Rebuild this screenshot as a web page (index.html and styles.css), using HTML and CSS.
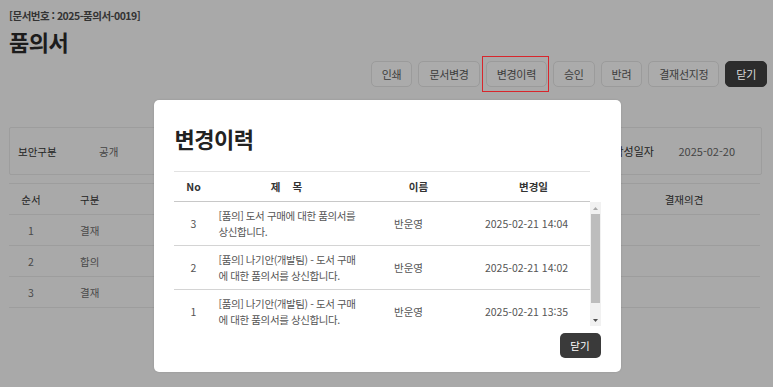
FILE: index.html
```html
<!DOCTYPE html>
<html lang="ko">
<head>
<meta charset="utf-8">
<title>품의서</title>
<link rel="stylesheet" href="styles.css">
</head>
<body>
<div class="page">
  <div class="docno">[문서번호 : 2025-품의서-0019]</div>
  <h1 class="doc-title">품의서</h1>
  <div class="toolbar">
    <button class="btn">인쇄</button>
    <button class="btn">문서변경</button>
    <button class="btn btn-marked">변경이력</button>
    <button class="btn">승인</button>
    <button class="btn">반려</button>
    <button class="btn">결재선지정</button>
    <button class="btn btn-dark">닫기</button>
  </div>
  <div class="info">
    <span class="info-label">보안구분</span>
    <span class="info-value">공개</span>
    <span class="info-spacer"></span>
    <span class="info-label wide">작성일자</span>
    <span class="info-value">2025-02-20</span>
  </div>
  <div class="line-table">
    <div class="lt-row lt-head">
      <span class="c-no">순서</span><span class="c-type">구분</span><span class="c-mid"></span><span class="c-opinion">결재의견</span>
    </div>
    <div class="lt-row">
      <span class="c-no">1</span><span class="c-type">결재</span><span class="c-mid"></span><span class="c-opinion"></span>
    </div>
    <div class="lt-row">
      <span class="c-no">2</span><span class="c-type">합의</span><span class="c-mid"></span><span class="c-opinion"></span>
    </div>
    <div class="lt-row">
      <span class="c-no">3</span><span class="c-type">결재</span><span class="c-mid"></span><span class="c-opinion"></span>
    </div>
  </div>
</div>

<div class="modal-layer">
  <div class="modal">
    <h2 class="modal-title">변경이력</h2>
    <div class="hist">
      <div class="hist-head">
        <span class="h-no">No</span>
        <span class="h-title">제 목</span>
        <span class="h-name">이름</span>
        <span class="h-date">변경일</span>
      </div>
      <div class="hist-body">
        <div class="hist-rows">
          <div class="hist-row">
            <span class="b-no">3</span>
            <span class="b-title">[품의] 도서 구매에 대한 품의서를 상신합니다.</span>
            <span class="b-name">반운영</span>
            <span class="b-date">2025-02-21 14:04</span>
          </div>
          <div class="hist-row">
            <span class="b-no">2</span>
            <span class="b-title">[품의] 나기안(개발팀) - 도서 구매에 대한 품의서를 상신합니다.</span>
            <span class="b-name">반운영</span>
            <span class="b-date">2025-02-21 14:02</span>
          </div>
          <div class="hist-row">
            <span class="b-no">1</span>
            <span class="b-title">[품의] 나기안(개발팀) - 도서 구매에 대한 품의서를 상신합니다.</span>
            <span class="b-name">반운영</span>
            <span class="b-date">2025-02-21 13:35</span>
          </div>
        </div>
        <div class="scrollbar">
          <div class="sb-btn">
            <svg width="5" height="3" viewBox="0 0 5 3"><path d="M0 3 L2.5 0 L5 3 Z" fill="#a8a8a8"/></svg>
          </div>
          <div class="sb-track"><div class="sb-thumb"></div></div>
          <div class="sb-btn">
            <svg width="5" height="3" viewBox="0 0 5 3"><path d="M0 0 L2.5 3 L5 0 Z" fill="#505050"/></svg>
          </div>
        </div>
      </div>
    </div>
    <div class="modal-foot">
      <button class="close-btn">닫기</button>
    </div>
  </div>
</div>
</body>
</html>
```
FILE: styles.css
```css
* { box-sizing: border-box; }

html, body {
  margin: 0;
  padding: 0;
}

body {
  width: 773px;
  height: 387px;
  overflow: hidden;
  background: #a9a9a9;
  font-family: "Noto Sans CJK KR", "Noto Sans", sans-serif;
  color: #2a2a2a;
  position: relative;
}

.page {
  padding: 8px 11px 0 9px;
}

.docno {
  font-size: 10.5px;
  line-height: 16px;
  font-weight: 600;
  color: #333;
  letter-spacing: -0.5px;
}

.doc-title {
  margin: 2px 0 0;
  font-size: 22px;
  line-height: 30px;
  font-weight: 700;
  color: #1c1c1c;
  letter-spacing: -0.5px;
}

.toolbar {
  display: flex;
  justify-content: flex-end;
  gap: 6px;
  margin: 5px -5px 0 0;
}

.btn {
  position: relative;
  height: 26px;
  padding: 0 10px;
  min-width: 40px;
  font-family: inherit;
  font-size: 11px;
  letter-spacing: -0.3px;
  color: #3c3c3c;
  background: #ababab;
  border: 1px solid #9b9b9b;
  border-radius: 5px;
}

.btn-marked::after {
  content: "";
  position: absolute;
  top: -6px;
  bottom: -6px;
  left: -5px;
  right: -3px;
  border: 1.5px solid #d8262c;
}

.btn-dark {
  background: #2c2c2c;
  border-color: #2c2c2c;
  color: #dcdcdc;
}

.info {
  display: flex;
  align-items: center;
  height: 48px;
  margin-top: 40px;
  padding: 0 26px 0 8px;
  border: 1px solid #9d9d9d;
  border-radius: 2px;
  font-size: 10.5px;
}

.info-label {
  width: 81px;
  color: #222;
}

.info-label.wide { width: 65px; font-size: 11px; }

.info-value {
  color: #444;
}

.info-value:last-child { font-size: 11px; }

.info-spacer { flex: 1; }

.line-table {
  margin-top: 8px;
  margin-right: 2px;
  border-top: 1px solid #9d9d9d;
  font-size: 10.5px;
}

.lt-row {
  display: flex;
  align-items: center;
  height: 31px;
  border-bottom: 1px solid #9d9d9d;
  color: #4a4a4a;
}

.lt-head { color: #252525; }

.c-no { width: 44px; text-align: center; }
.c-type { width: 60px; padding-left: 27px; box-sizing: content-box; }
.c-mid { flex: 1; }
.c-opinion { width: 152px; text-align: center; }

/* modal */
.modal-layer {
  position: absolute;
  inset: 0;
  display: flex;
  justify-content: center;
  align-items: flex-start;
  padding: 100px 0 0 1px;
}

.modal {
  width: 467px;
  height: 272px;
  background: #fff;
  border-radius: 5px;
  padding: 24px 20px 14px 20px;
  box-shadow: 0 0 2px rgba(0,0,0,0.15);
}

.modal-title {
  margin: 0 0 0 1px;
  font-size: 22px;
  line-height: 28px;
  font-weight: 700;
  color: #222;
  letter-spacing: -0.5px;
}

.hist {
  margin-top: 19px;
  font-size: 10.5px;
}

.hist-head {
  display: grid;
  grid-template-columns: 40px 146px 118px 112px;
  align-items: center;
  width: 416px;
  height: 31px;
  border-top: 1px solid #e2e2e2;
  border-bottom: 1px solid #c8c8c8;
  color: #333;
  font-weight: 700;
  text-align: center;
}

.h-title { word-spacing: 9px; }

.hist-body {
  display: flex;
  height: 124px;
}

.hist-rows {
  width: 416px;
  overflow: hidden;
}

.hist-row {
  display: grid;
  grid-template-columns: 40px 146px 98px 132px;
  align-items: center;
  height: 44px;
  border-bottom: 1px solid #d4d4d4;
  color: #555;
}

.b-no, .b-name, .b-date { text-align: center; }

.b-date { padding-left: 6px; }

.b-title {
  padding-left: 5px;
  line-height: 16px;
  letter-spacing: -0.4px;
}

.scrollbar {
  width: 11px;
  display: flex;
  flex-direction: column;
  background: #f1f1f1;
}

.sb-btn {
  height: 12px;
  display: flex;
  align-items: center;
  justify-content: center;
}

.sb-track {
  flex: 1;
}

.sb-thumb {
  height: 89px;
  margin: 0 1px;
  background: #bdbdbd;
}

.modal-foot {
  display: flex;
  justify-content: flex-end;
  margin-top: 7px;
}

.close-btn {
  width: 41px;
  height: 25px;
  padding: 0;
  font-family: inherit;
  font-size: 10.5px;
  color: #fff;
  background: #3a3a3a;
  border: none;
  border-radius: 5px;
}
```
